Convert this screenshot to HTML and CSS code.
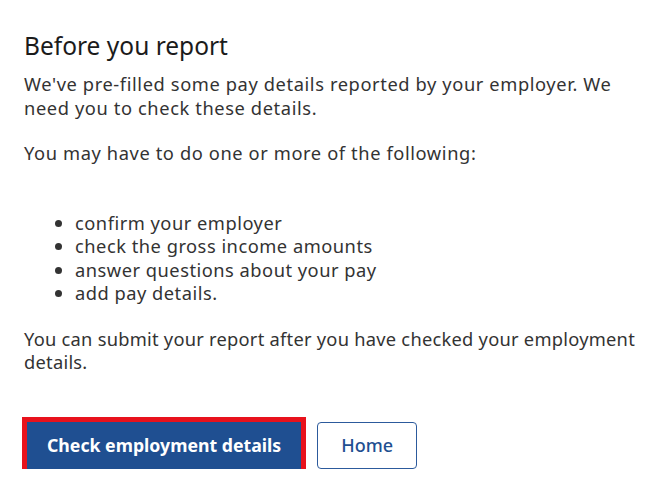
FILE: index.html
```html
<!DOCTYPE html>
<html lang="en">
<head>
  <meta charset="UTF-8">
  <title>Before you report</title>
  <link rel="stylesheet" href="styles.css">
</head>
<body>
  <div id="dialog">
    <h1>Before you report</h1>

    <p>We've pre-filled some pay details reported by your employer. We need you to check these details.</p>
    <p>You may have to do one or more of the following:</p>

    <ul class="todoList">
      <li>confirm your employer</li>
      <li>check the gross income amounts</li>
      <li>answer questions about your pay</li>
      <li>add pay details.</li>
    </ul>

    <p class="submitNote">You can submit your report after you have checked your employment details.</p>

    <div class="buttonRow">
      <button class="primaryBtn">Check employment details</button>
      <button class="secondaryBtn">Home</button>
    </div>
  </div>
</body>
</html>
```

FILE: styles.css
```css
body {
  margin: 0;
  background-color: #ffffff;
  font-family: "Noto Sans", "Open Sans", sans-serif;
  color: #333333;
}

#dialog {
  padding: 28px 8px 0 24px;
}

h1 {
  margin: 0 0 8px 0;
  font-size: 24.5px;
  line-height: 36px;
  font-weight: normal;
  color: #1b1b1b;
}

p {
  margin: 0 0 22px 0;
  font-size: 18.3px;
  letter-spacing: 0.6px;
  line-height: 23.5px;
}

.submitNote {
  letter-spacing: 0.25px;
}

.todoList {
  margin: 46px 0 22px 0;
  padding-left: 51px;
  font-size: 18.3px;
  letter-spacing: 0.5px;
  line-height: 23.5px;
}

.buttonRow {
  display: flex;
  gap: 16px;
  margin-top: 48px;
  padding-left: 3px;
}

button {
  height: 47px;
  font-family: inherit;
  font-size: 17.7px;
  border-radius: 4px;
  cursor: pointer;
}

.primaryBtn {
  padding: 0 20px;
  background-color: #1f4f91;
  color: white;
  font-weight: bold;
  border: none;
  border-radius: 0;
  outline: 5px solid #e8121c;
}

.secondaryBtn {
  padding: 0 23px;
  background-color: white;
  color: #1f4f91;
  font-size: 18px;
  font-weight: 500;
  border: 1.5px solid #2c5a9c;
}
```
